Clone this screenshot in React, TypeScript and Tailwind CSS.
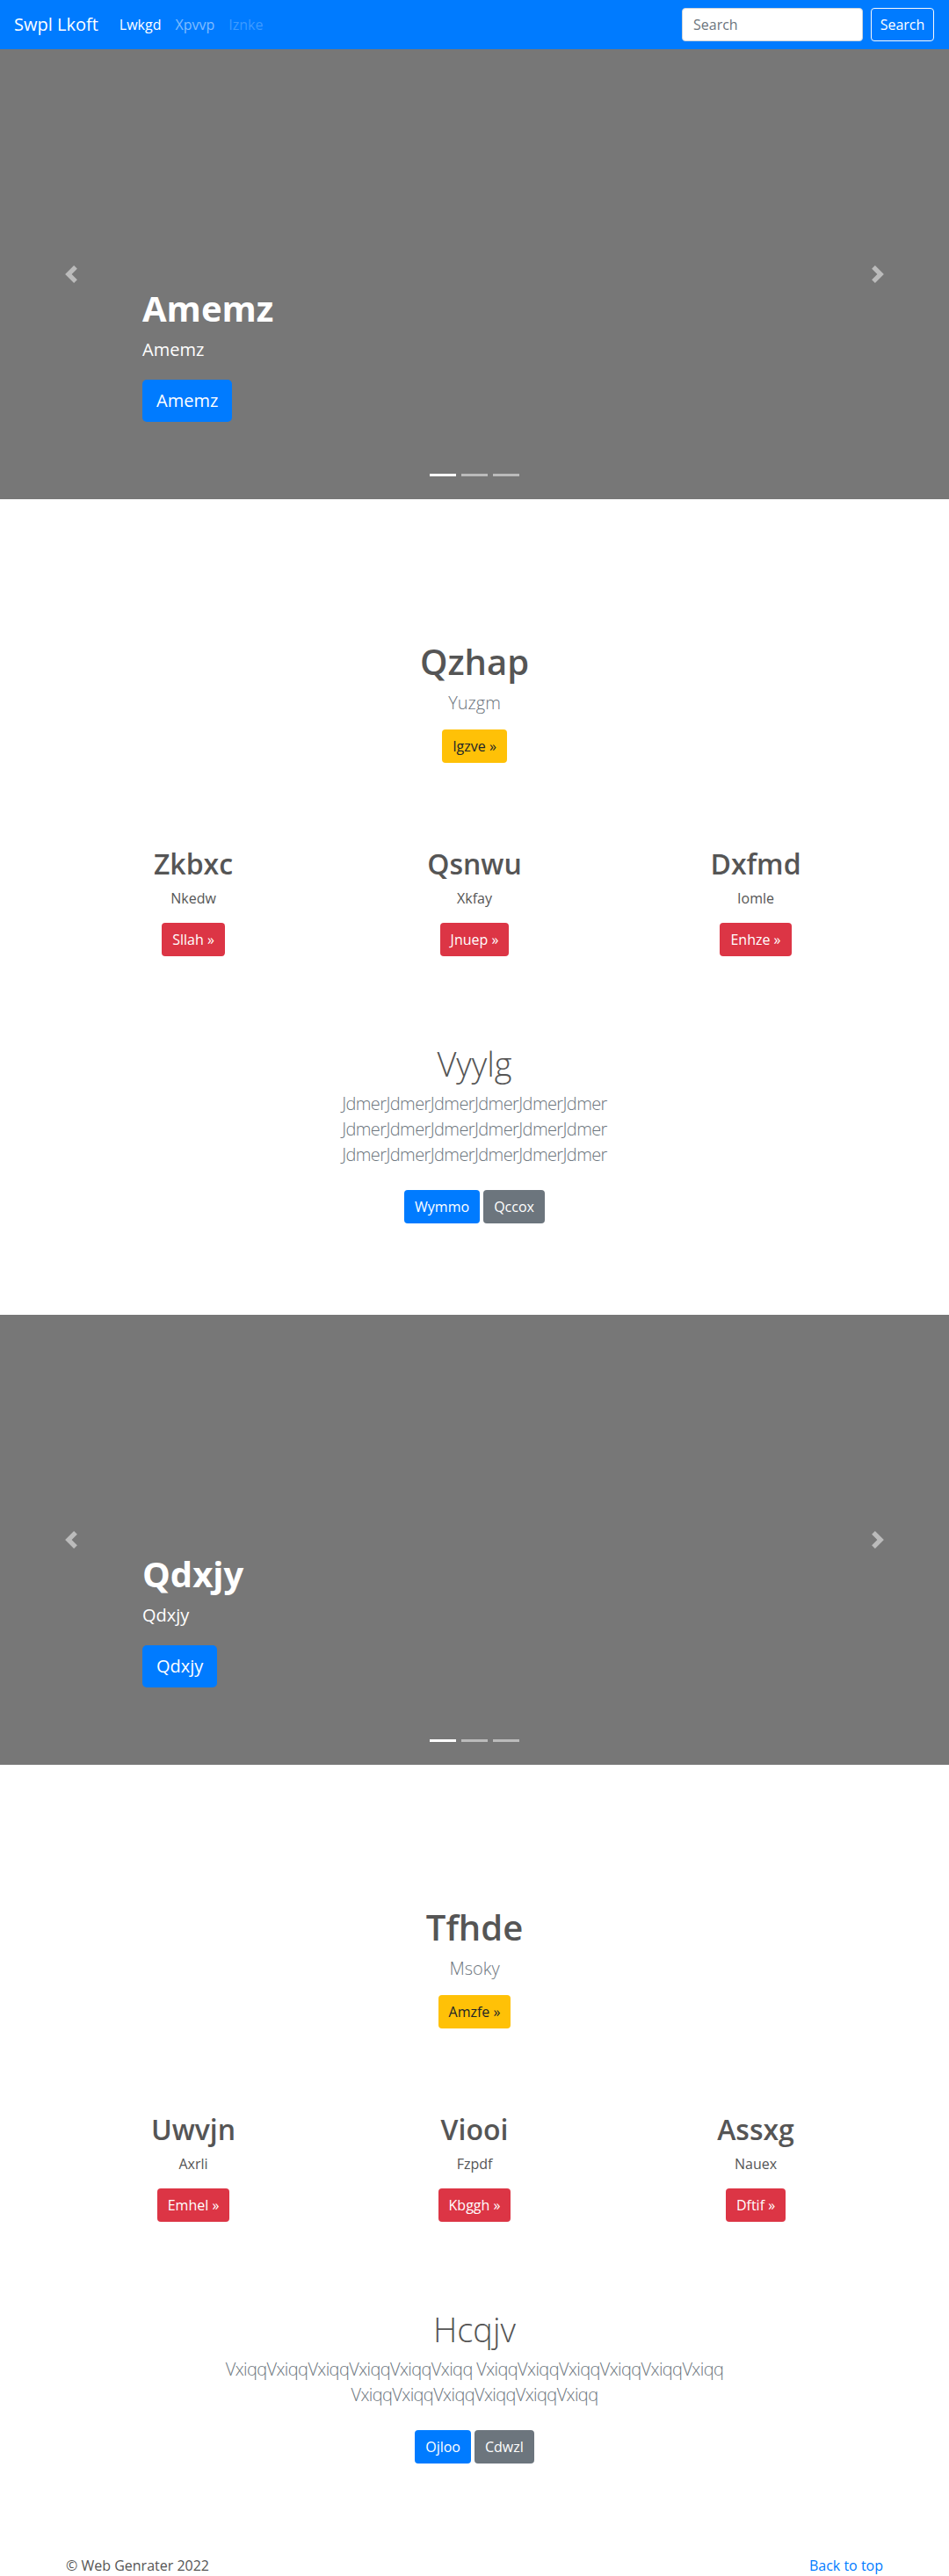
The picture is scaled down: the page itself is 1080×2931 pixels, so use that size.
import React from "react";

type Slide = { title: string };

type Feature = { title: string; text: string; cta: string };

type Section = {
    heading: string;
    lead: string;
    cta: string;
    features: Feature[];
    bigTitle: string;
    lines: string[];
    primary: string;
    secondary: string;
};

const sections: { slide: Slide; section: Section }[] = [
    {
        slide: { title: "Amemz" },
        section: {
            heading: "Qzhap",
            lead: "Yuzgm",
            cta: "Igzve »",
            features: [
                { title: "Zkbxc", text: "Nkedw", cta: "Sllah »" },
                { title: "Qsnwu", text: "Xkfay", cta: "Jnuep »" },
                { title: "Dxfmd", text: "Iomle", cta: "Enhze »" },
            ],
            bigTitle: "Vyylg",
            lines: [
                "JdmerJdmerJdmerJdmerJdmerJdmer",
                "JdmerJdmerJdmerJdmerJdmerJdmer",
                "JdmerJdmerJdmerJdmerJdmerJdmer",
            ],
            primary: "Wymmo",
            secondary: "Qccox",
        },
    },
    {
        slide: { title: "Qdxjy" },
        section: {
            heading: "Tfhde",
            lead: "Msoky",
            cta: "Amzfe »",
            features: [
                { title: "Uwvjn", text: "Axrli", cta: "Emhel »" },
                { title: "Viooi", text: "Fzpdf", cta: "Kbggh »" },
                { title: "Assxg", text: "Nauex", cta: "Dftif »" },
            ],
            bigTitle: "Hcqjv",
            lines: [
                "VxiqqVxiqqVxiqqVxiqqVxiqqVxiqq VxiqqVxiqqVxiqqVxiqqVxiqqVxiqq",
                "VxiqqVxiqqVxiqqVxiqqVxiqqVxiqq",
            ],
            primary: "Ojloo",
            secondary: "Cdwzl",
        },
    },
];

const Chevron: React.FC<{ dir: "left" | "right" }> = ({ dir }) => (
    <svg width="20" height="20" viewBox="0 0 8 8" fill="#fff" aria-hidden="true">
        <path
            d={
                dir === "left"
                    ? "M5.25 0l-4 4 4 4 1.5-1.5L4.25 4l2.5-2.5L5.25 0z"
                    : "M2.75 0l-1.5 1.5L3.75 4l-2.5 2.5L2.75 8l4-4-4-4z"
            }
        />
    </svg>
);

const Navbar: React.FC = () => (
    <nav className="h-14 bg-[#007bff] flex items-center pl-4 pr-[17px]">
        <a href="#" className="text-[20px] leading-[30px] text-white mr-4">Swpl Lkoft</a>
        <ul className="flex text-base leading-6">
            <li><a href="#" className="px-2 text-white">Lwkgd</a></li>
            <li><a href="#" className="px-2 text-white/50">Xpvvp</a></li>
            <li><a href="#" className="px-2 text-white/25">Iznke</a></li>
        </ul>
        <form className="ml-auto flex items-center">
            <input
                type="text"
                placeholder="Search"
                className="w-[206px] h-[38px] px-3 rounded-[4px] bg-white border border-[#ced4da] text-base text-[#495057] placeholder:text-[#6c757d] outline-none"
            />
            <button type="button" className="ml-[9px] w-[72px] h-[38px] rounded-[4px] border border-[#f8f9fa] text-white text-base">
                Search
            </button>
        </form>
    </nav>
);

const Carousel: React.FC<{ slide: Slide }> = ({ slide }) => (
    <div className="relative h-[512px] bg-[#777]">
        {/* caption */}
        <div className="pl-[162px] pt-[271px]">
            <h1 className="text-[40px] leading-[48px] font-bold text-white">{slide.title}</h1>
            <p className="mt-2 text-[20px] leading-[30px] text-white">{slide.title}</p>
            <button type="button" className="mt-[19px] h-12 px-4 rounded-[5px] bg-[#007bff] text-white text-[20px] leading-[30px]">
                {slide.title}
            </button>
        </div>

        {/* controls */}
        <a href="#" className="absolute left-0 top-0 bottom-0 w-[15%] flex items-center justify-center opacity-50">
            <Chevron dir="left" />
        </a>
        <a href="#" className="absolute right-0 top-0 bottom-0 w-[15%] flex items-center justify-center opacity-50">
            <Chevron dir="right" />
        </a>

        {/* indicators */}
        <div className="absolute left-0 right-0 bottom-[26px] flex justify-center gap-[6px]">
            <span className="w-[30px] h-[3px] bg-white" />
            <span className="w-[30px] h-[3px] bg-white/50" />
            <span className="w-[30px] h-[3px] bg-white/50" />
        </div>
    </div>
);

const Content: React.FC<{ section: Section }> = ({ section }) => (
    <section className="pt-[161px] pb-[104px] text-center">
        <h2 className="text-[40px] leading-[48px] font-semibold text-[#555]">{section.heading}</h2>
        <p className="mt-2 text-[20px] leading-[30px] font-light text-[#6c757d]">{section.lead}</p>
        <button type="button" className="mt-[15px] h-[38px] px-3 rounded-[4px] bg-[#ffc107] text-[#212529] text-base">
            {section.cta}
        </button>

        <div className="mt-[96px] max-w-[960px] mx-auto grid grid-cols-3">
            {section.features.map((f) => (
                <div key={f.title} className="px-[15px]">
                    <h3 className="text-[32px] leading-[38px] font-semibold text-[#555]">{f.title}</h3>
                    <p className="mt-2 text-base leading-6 text-[#555]">{f.text}</p>
                    <button type="button" className="mt-4 h-[38px] px-3 rounded-[4px] bg-[#dc3545] text-white text-base">
                        {f.cta}
                    </button>
                </div>
            ))}
        </div>

        <div className="mt-[99px]">
            <h2 className="text-[38px] leading-[46px] font-light text-[#555]">{section.bigTitle}</h2>
            <p className="mt-2 text-[20px] leading-[29px] font-light tracking-[-0.6px] text-[#6c757d]">
                {section.lines.map((line, i) => (
                    <span key={i} className="block">{line}</span>
                ))}
            </p>
            <div className="mt-[26px] flex justify-center gap-1">
                <button type="button" className="h-[38px] px-3 rounded-[4px] bg-[#007bff] text-white text-base">
                    {section.primary}
                </button>
                <button type="button" className="h-[38px] px-3 rounded-[4px] bg-[#6c757d] text-white text-base">
                    {section.secondary}
                </button>
            </div>
        </div>
    </section>
);

export default function App() {
    return (
        <div className="min-h-screen bg-white font-['Open_Sans',sans-serif]">
            <Navbar />
            {sections.map(({ slide, section }) => (
                <React.Fragment key={slide.title}>
                    <Carousel slide={slide} />
                    <Content section={section} />
                </React.Fragment>
            ))}
            <footer className="max-w-[960px] mx-auto px-[15px] flex justify-between text-base leading-6">
                <p className="text-[#555]">© Web Genrater 2022</p>
                <a href="#" className="text-[#007bff]">Back to top</a>
            </footer>
        </div>
    );
}
